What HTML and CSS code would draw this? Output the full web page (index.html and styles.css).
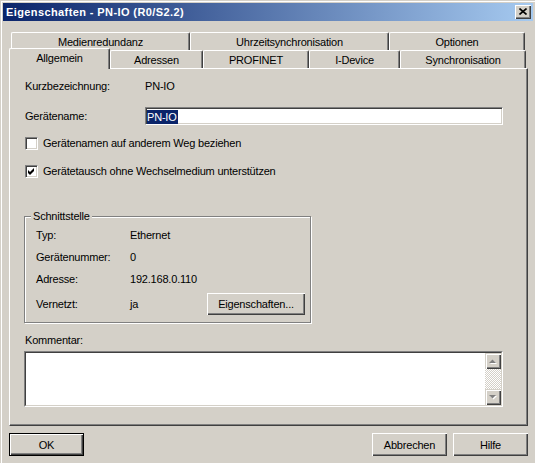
FILE: index.html
```html
<!DOCTYPE html>
<html lang="de">
<head>
<meta charset="utf-8">
<title>Eigenschaften - PN-IO (R0/S2.2)</title>
<link rel="stylesheet" href="styles.css">
</head>
<body>
<div class="window">
  <div class="titlebar">
    <span class="title">Eigenschaften - PN-IO (R0/S2.2)</span>
    <span class="close">
      <svg width="8" height="7" viewBox="0 0 8 7"><path d="M0.5 0.5 L7.5 6.5 M7.5 0.5 L0.5 6.5" stroke="#000" stroke-width="1.6" fill="none"/></svg>
    </span>
  </div>
  <div class="dialog">
    <div class="tabs">
      <div class="tabrow">
        <div class="tab w-med">Medienredundanz</div>
        <div class="tab w-uhr">Uhrzeitsynchronisation</div>
        <div class="tab w-opt">Optionen</div>
      </div>
      <div class="tabrow">
        <div class="tab active w-all">Allgemein</div>
        <div class="tab w-adr">Adressen</div>
        <div class="tab w-pro">PROFINET</div>
        <div class="tab w-idv">I-Device</div>
        <div class="tab w-syn">Synchronisation</div>
      </div>
    </div>
    <div class="panel">
      <div class="row r-kurz">
        <span class="lbl">Kurzbezeichnung:</span>
        <span>PN-IO</span>
      </div>
      <div class="row r-name">
        <span class="lbl">Gerätename:</span>
        <div class="input"><span class="sel">PN-IO</span></div>
      </div>
      <div class="row r-cb1">
        <span class="box"></span>
        <span>Gerätenamen auf anderem Weg beziehen</span>
      </div>
      <div class="row r-cb2">
        <span class="box">
          <svg width="9" height="9" viewBox="0 0 9 9"><path d="M1 3 L3 5 L7 1 L7 4 L3 8 L1 6 Z" fill="#000"/></svg>
        </span>
        <span>Gerätetausch ohne Wechselmedium unterstützen</span>
      </div>
      <fieldset class="group">
        <legend>Schnittstelle</legend>
        <div class="frow"><span class="flbl">Typ:</span><span>Ethernet</span></div>
        <div class="frow"><span class="flbl">Gerätenummer:</span><span>0</span></div>
        <div class="frow"><span class="flbl">Adresse:</span><span>192.168.0.110</span></div>
        <div class="frow f-last"><span class="flbl">Vernetzt:</span><span>ja</span><button class="btn b-eig">Eigenschaften...</button></div>
      </fieldset>
      <div class="komm">Kommentar:</div>
      <div class="textarea">
        <div class="ta-inner">
          <div class="scroll">
            <span class="sbtn">
              <svg width="8" height="5" viewBox="0 0 8 5"><polygon points="1,5 8,5 4.5,1.5" fill="#fff"/><polygon points="0,4 7,4 3.5,0.5" fill="#808080"/></svg>
            </span>
            <span class="track"></span>
            <span class="sbtn">
              <svg width="8" height="5" viewBox="0 0 8 5"><polygon points="1,1 8,1 4.5,4.5" fill="#fff"/><polygon points="0,0 7,0 3.5,3.5" fill="#808080"/></svg>
            </span>
          </div>
        </div>
      </div>
    </div>
    <div class="actions">
      <button class="btn b-main default">OK</button>
      <button class="btn b-main">Abbrechen</button>
      <button class="btn b-main">Hilfe</button>
    </div>
  </div>
</div>
</body>
</html>
```
FILE: styles.css
```css
* { box-sizing: border-box; }
html, body { margin: 0; padding: 0; }
body {
  width: 535px;
  height: 463px;
  overflow: hidden;
  background: #d4d0c8;
  font-family: "Liberation Sans", Arial, sans-serif;
  font-size: 11px;
  letter-spacing: -0.2px;
  color: #000;
}
.window {
  height: 463px;
  padding: 3px 2px 0 3px;
  box-shadow: inset 1px 1px 0 #d4d0c8, inset 2px 2px 0 #fff;
}
.titlebar {
  height: 18px;
  display: flex;
  align-items: center;
  padding: 0 2px 0 2px;
  background: linear-gradient(to right, #0a246a, #a6caf0);
}
.title {
  color: #fff;
  font-weight: bold;
  letter-spacing: 0.4px;
  margin-left: 1px;
}
.close {
  margin-left: auto;
  width: 16px;
  height: 14px;
  background: #d4d0c8;
  display: flex;
  align-items: center;
  justify-content: center;
  box-shadow: inset 1px 1px 0 #fff, inset -1px -1px 0 #404040, inset -2px -2px 0 #808080;
}
.close svg { display: block; margin: 0 1px 1px 0; }
.dialog {
  padding: 11px 0 0 6px;
}
.tabs { padding-left: 2px; }
.tabrow {
  display: flex;
  height: 18px;
}
.tab {
  height: 18px;
  display: flex;
  align-items: center;
  justify-content: center;
  background: #d4d0c8;
  border-top: 1px solid #fff;
  border-left: 1px solid #fff;
  border-right: 1px solid #404040;
  box-shadow: inset -1px 0 0 #808080;
  border-radius: 2px 2px 0 0;
  padding-top: 1px;
}
.tab.active {
  position: relative;
  z-index: 1;
  height: 21px;
  margin-top: -2px;
  margin-left: -2px;
  padding-top: 0;
  padding-bottom: 2px;
}
.w-med { width: 179px; }
.w-uhr { width: 199px; }
.w-opt { width: 136px; }
.w-all { width: 101px; }
.w-adr { width: 93px; }
.w-pro { width: 106px; }
.w-idv { width: 91px; }
.w-syn { width: 126px; }
.panel {
  width: 519px;
  height: 358px;
  border-top: 1px solid #fff;
  border-left: 1px solid #fff;
  border-right: 1px solid #404040;
  border-bottom: 1px solid #404040;
  box-shadow: inset -1px -1px 0 #808080;
  padding: 8px 0 0 15px;
}
.row {
  display: flex;
  align-items: center;
}
.lbl { width: 120px; }
.r-kurz { height: 18px; }
.r-name { height: 18px; margin-top: 12px; }
.r-cb1 { height: 14px; margin-top: 11px; }
.r-cb2 { height: 14px; margin-top: 14px; }
.input {
  width: 358px;
  height: 18px;
  background: #fff;
  border: 1px solid;
  border-color: #808080 #fff #fff #808080;
  box-shadow: inset 1px 1px 0 #404040, inset -1px -1px 0 #d4d0c8;
  padding: 1px 0 0 1px;
  display: flex;
  align-items: center;
}
.sel {
  background: #0a246a;
  color: #fff;
  line-height: 14px;
  padding: 0 1px 0 0;
}
.box {
  width: 13px;
  height: 13px;
  flex: none;
  background: #fff;
  border: 1px solid;
  border-color: #808080 #fff #fff #808080;
  box-shadow: inset 1px 1px 0 #404040, inset -1px -1px 0 #d4d0c8;
  margin-right: 5px;
  padding: 1px 0 0 1px;
}
.box svg { display: block; }
.group {
  margin: 32px 0 0 -1px;
  width: 287px;
  min-width: 0;
  padding: 1px 5px 7px 11px;
  border: 1px solid #808080;
  box-shadow: inset 1px 1px 0 #fff, 1px 1px 0 #fff;
}
.group legend {
  padding: 0 2px;
  margin-left: -5px;
  line-height: 13px;
  background: #d4d0c8;
}
.frow {
  display: flex;
  align-items: center;
  height: 22px;
}
.flbl { width: 94px; }
.f-last { margin-top: 3px; }
.btn {
  font: inherit;
  letter-spacing: inherit;
  color: #000;
  background: #d4d0c8;
  border: none;
  padding: 0;
  height: 22px;
  box-shadow: inset 1px 1px 0 #fff, inset -1px -1px 0 #404040, inset -2px -2px 0 #808080;
}
.b-eig {
  margin-left: auto;
  width: 98px;
}
.komm {
  margin-top: 10px;
  height: 14px;
  line-height: 14px;
}
.textarea {
  margin: 4px 0 0 -1px;
  width: 479px;
  height: 56px;
  border: 1px solid;
  border-color: #808080 #fff #fff #808080;
}
.ta-inner {
  height: 100%;
  background: #fff;
  border: 1px solid;
  border-color: #404040 #d4d0c8 #d4d0c8 #404040;
  display: flex;
}
.scroll {
  margin-left: auto;
  width: 16px;
  display: flex;
  flex-direction: column;
}
.sbtn {
  width: 16px;
  height: 16px;
  flex: none;
  background: #d4d0c8;
  display: flex;
  align-items: center;
  justify-content: center;
  box-shadow: inset 1px 1px 0 #d4d0c8, inset 2px 2px 0 #fff, inset -1px -1px 0 #404040, inset -2px -2px 0 #808080;
}
.sbtn svg { display: block; }
.track {
  flex: 1;
  background: repeating-conic-gradient(#d4d0c8 0 25%, #fff 0 50%) 0 0 / 2px 2px;
}
.actions {
  width: 519px;
  display: flex;
  gap: 6px;
  padding-top: 7px;
}
.b-main {
  width: 75px;
  height: 23px;
}
.b-main.default {
  margin-right: auto;
  border: 1px solid #000;
}
```
